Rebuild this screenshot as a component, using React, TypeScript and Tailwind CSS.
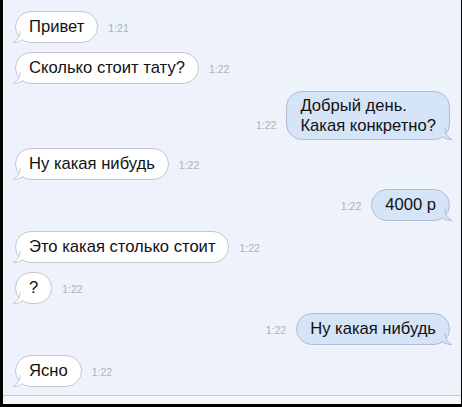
import React from 'react';

type Msg = {
  text: string[];
  time: string;
  out?: boolean;
  mt: string;
};

const messages: Msg[] = [
  { text: ['Привет'], time: '1:21', mt: 'mt-[11px]' },
  { text: ['Сколько стоит тату?'], time: '1:22', mt: 'mt-[9px]' },
  { text: ['Добрый день.', 'Какая конкретно?'], time: '1:22', out: true, mt: 'mt-[7px]' },
  { text: ['Ну какая нибудь'], time: '1:22', mt: 'mt-[8px]' },
  { text: ['4000 р'], time: '1:22', out: true, mt: 'mt-[9px]' },
  { text: ['Это какая столько стоит'], time: '1:22', mt: 'mt-[10px]' },
  { text: ['?'], time: '1:22', mt: 'mt-[9px]' },
  { text: ['Ну какая нибудь'], time: '1:22', out: true, mt: 'mt-[9px]' },
  { text: ['Ясно'], time: '1:22', mt: 'mt-[10px]' },
];

// little curled tail under the bubble corner
const Tail = ({ out }: { out?: boolean }) => (
  <svg
    width="12"
    height="12"
    viewBox="0 0 12 12"
    className={out ? 'absolute -right-[4px] bottom-[-1px] -scale-x-100' : 'absolute -left-[4px] bottom-[-1px]'}
  >
    <path
      d="M8 0 C8 5 6 9 1 11.5 C5 11.5 8 10.5 11 8.5"
      fill={out ? '#d6e4f7' : '#ffffff'}
      stroke={out ? '#aebdd3' : '#c3c7cf'}
      strokeWidth="1"
    />
  </svg>
);

const Bubble = ({ m }: { m: Msg }) => (
  <div
    className={
      'relative rounded-[16px] border px-[13px] text-[16.6px] leading-[20px] text-[#111] ' +
      (m.out ? 'bg-[#d6e4f7] border-[#aebdd3] ' : 'bg-white border-[#c3c7cf] ') +
      (m.text.length > 1 ? 'pt-[4px] pb-[3px]' : 'py-[5px]')
    }
  >
    {m.text.map((t) => (
      <div key={t} className="whitespace-nowrap">
        {t}
      </div>
    ))}
    <Tail out={m.out} />
  </div>
);

export default function App() {
  return (
    <div className="w-[462px] h-[407px] flex flex-col bg-[#eef3fb] border-l-[3px] border-r border-b-[3px] border-black font-['Liberation_Sans',Arial,sans-serif]">
      <div className="flex-1 flex flex-col border-l border-[#f7f9fc] pl-[11px] pr-[11px]">
        {messages.map((m, i) => (
          <div
            key={i}
            className={'flex items-end gap-[10px] ' + m.mt + (m.out ? ' flex-row-reverse' : '')}
          >
            <Bubble m={m} />
            <span className="mb-[9px] text-[10.5px] leading-[12px] text-[#adb1b8]">{m.time}</span>
          </div>
        ))}
      </div>
      <div className="h-[9px] border-t border-[#c5c9d1] bg-[#f4f6f9]" />
    </div>
  );
}
